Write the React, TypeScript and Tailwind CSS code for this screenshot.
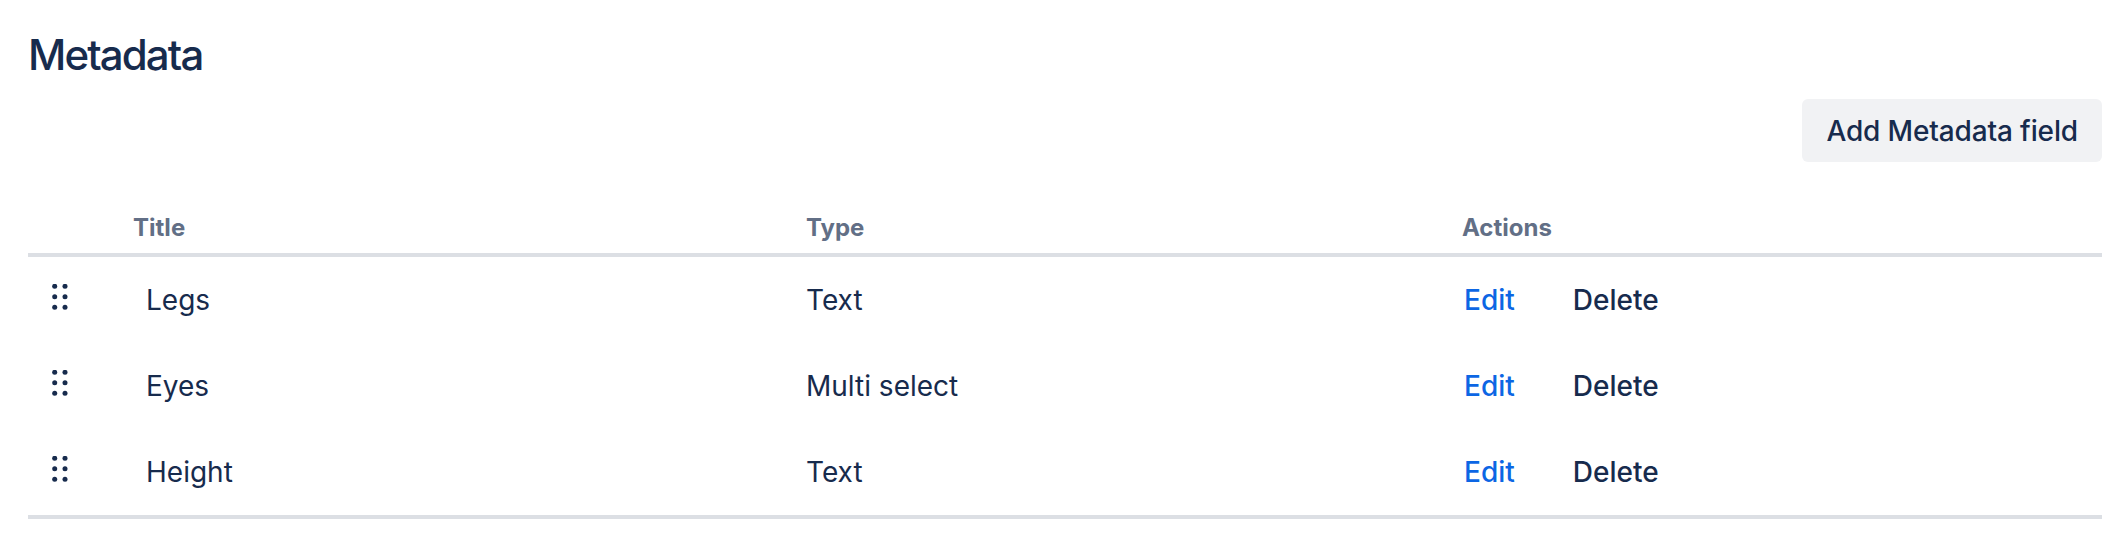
import React from "react";

const rows = [
  { title: "Legs", type: "Text" },
  { title: "Eyes", type: "Multi select" },
  { title: "Height", type: "Text" },
];

function DragHandle() {
  return (
    <svg width="16" height="26" viewBox="0 0 16 26" className="mb-[6px]">
      {[3, 13.5, 24].map((cy) => (
        <g key={cy}>
          <circle cx="2.7" cy={cy - 0.7} r="2.5" fill="#172B4D" />
          <circle cx="13" cy={cy - 0.7} r="2.5" fill="#172B4D" />
        </g>
      ))}
    </svg>
  );
}

export default function App() {
  return (
    <div
      className="w-[2122px] h-[554px] bg-white text-[#172B4D] px-[20px]"
      style={{ fontFamily: "Inter, 'Noto Sans', sans-serif" }}
    >
      <div className="px-[8px] pt-[31px]">
        <h1 className="text-[42px] leading-[48px] font-medium tracking-[-0.045em]">Metadata</h1>
      </div>
      <div className="flex justify-end mt-[20px]">
        <button className="h-[63px] px-[24px] rounded-[6px] bg-[#F1F2F4] text-[28px] font-medium tracking-[-0.005em] text-[#172B4D]">
          Add Metadata field
        </button>
      </div>
      <div className="ml-[8px]">
        <div className="grid grid-cols-[105px_673px_656px_1fr] pt-[50px] pb-[9px] border-b-4 border-[#DCDFE4] text-[24px] leading-[32px] font-bold text-[#626F86]">
          <div />
          <div>Title</div>
          <div>Type</div>
          <div>Actions</div>
        </div>
        {rows.map((r) => (
          <div
            key={r.title}
            className="grid grid-cols-[105px_673px_656px_1fr] h-[86px] items-center text-[28px] leading-[36px]"
          >
            <div className="pl-[24px] flex items-center">
              <DragHandle />
            </div>
            <div className="pl-[13px]">{r.title}</div>
            <div>{r.type}</div>
            <div className="flex items-center gap-[58px] font-medium">
              <span className="text-[#0C66E4] pl-[2px]">Edit</span>
              <span className="text-[#172B4D]">Delete</span>
            </div>
          </div>
        ))}
        <div className="border-b-4 border-[#DCDFE4]" />
      </div>
    </div>
  );
}
